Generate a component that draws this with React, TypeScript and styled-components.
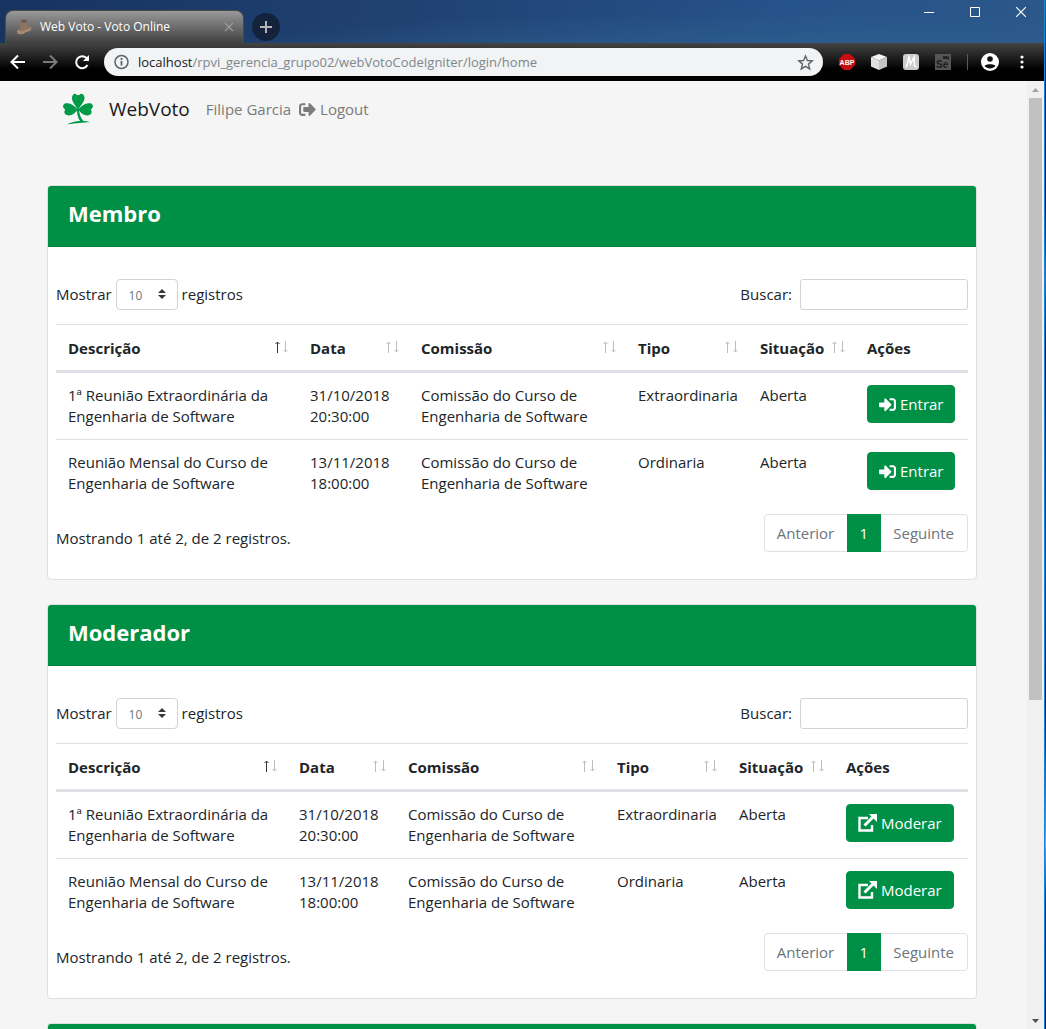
import React from 'react';
import styled, { createGlobalStyle } from 'styled-components';
import { FaSignInAlt, FaSignOutAlt } from 'react-icons/fa';

const GREEN = '#009045';
const INK = '#212529';
const LINE = '#dee2e6';
const FONT = '"Open Sans", "Noto Sans", sans-serif';

const GlobalStyle = createGlobalStyle`
  *, *::before, *::after { box-sizing: border-box; }
  body { margin: 0; font-family: ${FONT}; font-size: 15px; line-height: 21px; color: ${INK}; }
  button, input, select { font-family: inherit; }
`;

/* ---------- Browser window ---------- */

const Desktop = styled.div`
  height: 100vh;
  padding-right: 1px;
  overflow: hidden;
  background: linear-gradient(180deg, #2c5c8e 0%, #16263c 8%, #0d1a2c 20%, #3f6f9e 27%, #10151d 34%, #27476b 55%, #0d1726 68%, #7f9db8 82%, #16304f 88%, #0a0f18 100%);
`;

const Window = styled.div`
  height: 100%;
  display: flex;
  flex-direction: column;
  border-right: 1px solid #1883d7;
`;

const TabStrip = styled.div`
  flex: none;
  height: 43px;
  display: flex;
  align-items: flex-end;
  padding-left: 5px;
  background: radial-gradient(ellipse at 75% 160%, #30618e 0%, rgba(48, 97, 142, 0) 60%), linear-gradient(100deg, #17335f 0%, #204273 40%, #26528a 75%, #2b5789 100%);
`;

const Tab = styled.div`
  width: 239px;
  height: 33px;
  display: flex;
  align-items: center;
  gap: 8px;
  padding: 0 8px 0 10px;
  border: 1px solid #4a4a4a;
  border-bottom: 0;
  border-radius: 8px 8px 0 0;
  background: linear-gradient(#999, #404040);
  color: #fff;
  font-size: 12px;
  line-height: 16px;
`;

const TabTitle = styled.span`
  flex: 1;
  white-space: nowrap;
`;

const BareButton = styled.button`
  display: flex;
  align-items: center;
  justify-content: center;
  padding: 0;
  border: 0;
  background: none;
  color: inherit;
`;

const NewTab = styled(BareButton)`
  width: 28px;
  height: 28px;
  margin: 0 0 2px 8px;
  border-radius: 50%;
  background: #13233b;
  color: #b4b4b4;
`;

const WindowButtons = styled.div`
  display: flex;
  align-self: flex-start;
  margin-left: auto;
  color: #fff;
`;

const WindowButton = styled(BareButton)`
  width: 46px;
  height: 24px;
`;

const Toolbar = styled.div`
  flex: none;
  height: 38px;
  display: flex;
  align-items: center;
  padding: 0 10px 0 6px;
  background: linear-gradient(#444 0%, #000 70%);
  color: #fff;
`;

const ToolButton = styled(BareButton)<{ $dim?: boolean }>`
  flex: none;
  width: 24px;
  height: 24px;
  margin-right: 8px;
  color: ${(p) => (p.$dim ? '#7b7b7b' : '#fff')};
`;

const AddressBar = styled.div`
  flex: 1;
  height: 28px;
  display: flex;
  align-items: center;
  gap: 8px;
  margin: 0 12px 0 2px;
  padding: 0 9px;
  border-radius: 14px;
  background: #f1f3f4;
  color: #5f6368;
`;

const Url = styled.span`
  flex: 1;
  font-size: 13px;
  line-height: 18px;
  white-space: nowrap;
  color: #80868b;
  b { font-weight: 400; color: #202124; }
`;

const Extensions = styled.div`
  display: flex;
  align-items: center;
  gap: 8px;
`;

const Extension = styled(BareButton)`
  width: 24px;
  height: 24px;
`;

const Divider = styled.span`
  width: 1px;
  height: 16px;
  margin: 0 2px 0 4px;
  background: #5a5a5a;
`;

/* ---------- Page ---------- */

const Viewport = styled.div`
  flex: 1;
  min-height: 0;
  display: flex;
  background: #f5f5f5;
`;

const Page = styled.div`
  flex: 1;
  min-width: 0;
  overflow: hidden;
  padding: 0 50px 0 47px;
`;

const Scrollbar = styled.div`
  flex: none;
  width: 17px;
  display: grid;
  grid-template-rows: 17px 602px 1fr 17px;
  justify-items: center;
  align-items: center;
  background: #f0f0f0;
`;

const Thumb = styled.div`
  width: 13px;
  height: 100%;
  background: #c1c1c1;
`;

const Navbar = styled.nav`
  height: 104px;
  display: flex;
  align-items: flex-start;
  padding: 12px 15px;
`;

const NavItems = styled.div`
  display: flex;
  align-items: center;
  height: 32px;
`;

const Brand = styled.a`
  display: flex;
  align-items: center;
  gap: 15px;
  margin-right: 16px;
  color: #17191c;
  font-size: 19px;
  line-height: 30px;
  text-decoration: none;
`;

const NavLink = styled.a`
  display: flex;
  align-items: center;
  gap: 4px;
  margin-right: 8px;
  color: #7b7b7b;
  font-size: 15px;
  text-decoration: none;
  white-space: nowrap;
`;

const Card = styled.section`
  margin-bottom: 24px;
  border: 1px solid #dfdfdf;
  border-radius: 4px;
  background: #fff;
`;

const CardHeader = styled.header`
  min-height: 61px;
  padding: 13px 20px 18px;
  border-bottom: 1px solid #007e3d;
  border-radius: 3px 3px 0 0;
  background: ${GREEN};
`;

const CardTitle = styled.h3`
  margin: 0;
  color: #fff;
  font-size: 22px;
  font-weight: 700;
  line-height: 29px;
`;

const CardBody = styled.div`
  padding: 32px 8px 27px;
`;

const Controls = styled.div`
  display: flex;
  justify-content: space-between;
  align-items: center;
  margin-bottom: 14px;
`;

const ControlLabel = styled.label<{ $gap: number }>`
  display: flex;
  align-items: center;
  gap: ${(p) => p.$gap}px;
`;

const SelectWrap = styled.span`
  position: relative;
  display: flex;
  svg { position: absolute; right: 12px; top: 10px; pointer-events: none; }
`;

const LengthSelect = styled.select`
  appearance: none;
  width: 62px;
  height: 31px;
  padding: 2px 24px 0 12px;
  border: 1px solid #ced4da;
  border-radius: 4px;
  background: #fff;
  color: #6c757d;
  font-size: 12px;
`;

const SearchInput = styled.input`
  width: 168px;
  height: 31px;
  padding: 4px 8px;
  border: 1px solid #ced4da;
  border-radius: 3px;
  background: #fff;
  color: #495057;
  font-size: 14px;
`;

const Table = styled.table`
  width: 100%;
  table-layout: fixed;
  border-collapse: separate;
  border-spacing: 0;
`;

const Th = styled.th`
  padding: 13px 9px 11px 12px;
  border-top: 1px solid ${LINE};
  border-bottom: 3px solid ${LINE};
  font-weight: 700;
  text-align: left;
`;

const HeadCell = styled.div`
  display: flex;
  justify-content: space-between;
  svg { flex: none; margin-top: 3px; }
`;

const Td = styled.td`
  height: 66px;
  padding: 12px;
  vertical-align: top;
  tr + tr > & { border-top: 1px solid ${LINE}; height: 67px; }
`;

const ActionButton = styled.button`
  display: inline-flex;
  align-items: center;
  gap: 4px;
  height: 38px;
  padding: 0 11px;
  border: 1px solid ${GREEN};
  border-radius: 4px;
  background: ${GREEN};
  color: #fff;
  font-size: 15px;
  white-space: nowrap;
`;

const Footer = styled.div`
  display: flex;
  justify-content: space-between;
  align-items: flex-start;
  margin-top: 8px;
`;

const Info = styled.div`
  padding-top: 14px;
`;

const Pagination = styled.div`
  display: flex;
  border: 1px solid ${LINE};
  border-radius: 4px;
`;

const PageButton = styled.button<{ $active?: boolean }>`
  height: 36px;
  padding: 0 13px 0 12px;
  border: 0;
  background: none;
  color: #6c757d;
  font-size: 15px;
  ${(p) => p.$active && `
    height: 38px;
    width: 34px;
    margin: -1px 0;
    background: ${GREEN};
    color: #fff;
  `}
`;

/* ---------- Icons ---------- */

const Boot = () => (
  <svg width="16" height="16" viewBox="0 0 16 16">
    <path d="M5 1q3-1 6 0l0 4q1 2 4 3 1 2 0 3-3 2-5 2-3 3-7 2-3-1-2-4l3-2z" fill="#8b7463" />
    <path d="M1 11q4 2 8 0l6-2v2q-3 2-5 2-3 3-7 2-2-1-2-4z" fill="#a58b72" />
    <path d="M5 1q3-1 6 0v2q-3 1-6 0z" fill="#6d5a4e" />
  </svg>
);

const Clover = () => (
  <svg width="32" height="32" viewBox="0 0 32 32" fill="#009a49">
    <path d="M16 17C13.500 12.500 10 9 10 5c0-3.500 2.800-5.300 4.500-3.300.8.6 2.200.6 3 0C19.200-.3 22.500 1.500 22.500 5c0 4-4 7.500-6.500 12z" />
    <path d="M16 16.500c-3 4-7 7-11.300 5.600-2.300-.6-3-3-1.900-4.500.5-.7.200-1.500-.7-2.100C.2 14 1 11 3.700 10.300 8.500 9.300 12.500 13 16 16.500z" />
    <path d="M16 16.500c3 4 7 7 11.300 5.600 2.300-.6 3-3 1.900-4.500-.5-.7-.2-1.500.7-2.100 1.900-1.500 1.100-4.500-1.600-5.200-4.800-1-8.800 2.700-12.300 6.200z" />
    <path d="M15 15.500h2c0 5 1.500 9.500 4.500 12.500 2.300 0 4.500.4 6.500 1.200-6.500.2-13 1-23 2 4-1.800 8.500-2.900 13-3.100-2.400-3.500-3.200-7.600-3-12.600z" />
  </svg>
);

const SortArrows = ({ active }: { active?: boolean }) => (
  <svg width="15" height="12" viewBox="0 0 15 12" fill="none" strokeWidth="1">
    <path d="M3.500 12V1M1.500 3 3.500 1 5.500 3" stroke={active ? '#33373b' : '#bcbdbf'} />
    <path d="M11.500 0v11M9.500 9l2 2 2-2" stroke="#bcbdbf" />
  </svg>
);

const External = () => (
  <svg width="19" height="18" viewBox="0 0 19 18" fill="none" stroke="#fff">
    <path d="M10 4H1.500v12.500H14V11" strokeWidth="2.400" />
    <path d="M6.500 11.500 15 3" strokeWidth="3" />
    <path d="M11 0h8v8z" fill="#fff" stroke="none" />
  </svg>
);

const SelectArrows = () => (
  <svg width="8" height="10" viewBox="0 0 8 10" fill="#343a40">
    <path d="M4 0 8 4H0zM4 10 0 6h8z" />
  </svg>
);

/* ---------- Content ---------- */

type Panel = { title: string; action: string; icon: React.ReactNode; widths: number[] };

const panels: Panel[] = [
  { title: 'Membro', action: 'Entrar', icon: <FaSignInAlt size={17} />, widths: [242, 111, 217, 122, 107, 113] },
  { title: 'Moderador', action: 'Moderar', icon: <External />, widths: [231, 109, 209, 122, 107, 134] },
];

const columns = ['Descrição', 'Data', 'Comissão', 'Tipo', 'Situação', 'Ações'];

const meetings = [
  ['1ª Reunião Extraordinária da Engenharia de Software', '31/10/2018 20:30:00', 'Comissão do Curso de Engenharia de Software', 'Extraordinaria', 'Aberta'],
  ['Reunião Mensal do Curso de Engenharia de Software', '13/11/2018 18:00:00', 'Comissão do Curso de Engenharia de Software', 'Ordinaria', 'Aberta'],
];

const MeetingPanel = ({ title, action, icon, widths }: Panel) => (
  <Card>
    <CardHeader><CardTitle>{title}</CardTitle></CardHeader>
    <CardBody>
      <Controls>
        <ControlLabel $gap={4}>
          Mostrar
          <SelectWrap>
            <LengthSelect defaultValue="10"><option>10</option></LengthSelect>
            <SelectArrows />
          </SelectWrap>
          registros
        </ControlLabel>
        <ControlLabel $gap={8}>Buscar:<SearchInput type="search" /></ControlLabel>
      </Controls>
      <Table>
        <colgroup>{widths.map((w, i) => <col key={i} style={{ width: w }} />)}</colgroup>
        <thead>
          <tr>
            {columns.map((name, i) => (
              <Th key={name}>
                <HeadCell>{name}{i < 5 && <SortArrows active={i === 0} />}</HeadCell>
              </Th>
            ))}
          </tr>
        </thead>
        <tbody>
          {meetings.map((row) => (
            <tr key={row[0]}>
              {row.map((text, c) => <Td key={c}>{text}</Td>)}
              <Td><ActionButton>{icon}{action}</ActionButton></Td>
            </tr>
          ))}
        </tbody>
      </Table>
      <Footer>
        <Info>Mostrando 1 até 2, de 2 registros.</Info>
        <Pagination>
          <PageButton>Anterior</PageButton>
          <PageButton $active>1</PageButton>
          <PageButton>Seguinte</PageButton>
        </Pagination>
      </Footer>
    </CardBody>
  </Card>
);

export default function App() {
  return (
    <Desktop>
      <GlobalStyle />
      <Window>
        <TabStrip>
          <Tab>
            <Boot />
            <TabTitle>Web Voto - Voto Online</TabTitle>
            <BareButton aria-label="Fechar guia">
              <svg width="12" height="12" viewBox="0 0 12 12" stroke="#9a9a9a" strokeWidth="1.300"><path d="M2 2l8 8M10 2l-8 8" /></svg>
            </BareButton>
          </Tab>
          <NewTab aria-label="Nova guia">
            <svg width="14" height="14" viewBox="0 0 14 14" stroke="currentColor" strokeWidth="2"><path d="M7 1v12M1 7h12" /></svg>
          </NewTab>
          <WindowButtons>
            <WindowButton aria-label="Minimizar">
              <svg width="10" height="10" viewBox="0 0 10 10" stroke="currentColor"><path d="M0 5.500h10" /></svg>
            </WindowButton>
            <WindowButton aria-label="Maximizar">
              <svg width="10" height="10" viewBox="0 0 10 10" stroke="currentColor" fill="none"><path d="M.5.5h9v9h-9z" /></svg>
            </WindowButton>
            <WindowButton aria-label="Fechar">
              <svg width="10" height="10" viewBox="0 0 10 10" stroke="currentColor" strokeWidth="1.200"><path d="M0 0l10 10M10 0L0 10" /></svg>
            </WindowButton>
          </WindowButtons>
        </TabStrip>
        <Toolbar>
          <ToolButton aria-label="Voltar">
            <svg width="16" height="16" viewBox="0 0 16 16" fill="none" stroke="currentColor" strokeWidth="2"><path d="M15 8H2M8 1.500 1.500 8 8 14.500" /></svg>
          </ToolButton>
          <ToolButton $dim aria-label="Avançar">
            <svg width="16" height="16" viewBox="0 0 16 16" fill="none" stroke="currentColor" strokeWidth="2"><path d="M1 8h13M8 1.500 14.500 8 8 14.500" /></svg>
          </ToolButton>
          <ToolButton aria-label="Recarregar">
            <svg width="16" height="16" viewBox="0 0 16 16" fill="none" stroke="currentColor" strokeWidth="2"><path d="M13.500 11A6 6 0 1 1 12.500 4L14 5.500" /><path d="M15 1v6H9z" fill="currentColor" stroke="none" /></svg>
          </ToolButton>
          <AddressBar>
            <svg width="17" height="16" viewBox="0 0 17 16" fill="none" stroke="currentColor"><circle cx="8.500" cy="8" r="6.500" strokeWidth="1.500" /><path d="M8.500 7v4.500M8.500 4v2" strokeWidth="1.800" /></svg>
            <Url><b>localhost</b>/rpvi_gerencia_grupo02/webVotoCodeIgniter/login/home</Url>
            <svg width="17" height="17" viewBox="0 0 17 17" fill="none" stroke="currentColor" strokeWidth="1.400"><path d="M8.500 2l1.900 4.500 4.800.4-3.700 3.200 1.200 4.800-4.200-2.600-4.200 2.600 1.200-4.800L1.800 6.900l4.800-.4z" /></svg>
          </AddressBar>
          <Extensions>
            <Extension aria-label="Adblock Plus">
              <svg width="16" height="16" viewBox="0 0 16 16"><path d="M5 0h6l5 5v6l-5 5H5l-5-5V5z" fill="#c70d0f" /><text x="8" y="10.500" fontSize="7" fontWeight="700" fill="#fff" textAnchor="middle" fontFamily="Liberation Sans, sans-serif">ABP</text></svg>
            </Extension>
            <Extension aria-label="Cubo">
              <svg width="16" height="16" viewBox="0 0 16 16"><path d="M8 0l8 3-8 3.500L0 3z" fill="#f4f4f4" /><path d="M0 3l8 3.500V16l-8-3.500z" fill="#e2e2e2" /><path d="M16 3L8 6.500V16l8-3.500z" fill="#c4c4c4" /></svg>
            </Extension>
            <Extension aria-label="M">
              <svg width="16" height="16" viewBox="0 0 16 16"><rect width="16" height="16" rx="3" fill="#cbcbcb" /><path d="M3 13C5 10 5 6 6 3l1.500 7L11 3l.5 9 2 1" fill="none" stroke="#fff" strokeWidth="1.500" /></svg>
            </Extension>
            <Extension aria-label="Selenium">
              <svg width="16" height="16" viewBox="0 0 16 16"><rect width="16" height="16" fill="#555" /><path d="M8 2h4v1l2-1v4l-2-1H8z" fill="#262626" /><text x="1" y="14" fontSize="10" fontWeight="700" fill="#1c1c1c" fontFamily="Liberation Sans, sans-serif">Se</text></svg>
            </Extension>
            <Divider />
            <Extension aria-label="Perfil">
              <svg width="18" height="18" viewBox="0 0 18 18"><circle cx="9" cy="9" r="9" fill="#fff" /><circle cx="9" cy="6" r="2.800" fill="#111" /><path d="M3.500 13c1-2.500 10-2.500 11 0-2.500 3.300-8.500 3.300-11 0z" fill="#111" /></svg>
            </Extension>
            <Extension aria-label="Menu">
              <svg width="4" height="14" viewBox="0 0 4 14" fill="#fff"><circle cx="2" cy="2" r="1.600" /><circle cx="2" cy="7" r="1.600" /><circle cx="2" cy="12" r="1.600" /></svg>
            </Extension>
          </Extensions>
        </Toolbar>
        <Viewport>
          <Page>
            <Navbar>
              <NavItems>
                <Brand href="#"><Clover />WebVoto</Brand>
                <NavLink href="#">Filipe Garcia</NavLink>
                <NavLink href="#"><FaSignOutAlt size={17} />Logout</NavLink>
              </NavItems>
            </Navbar>
            {panels.map((panel) => <MeetingPanel key={panel.title} {...panel} />)}
            <Card><CardHeader /></Card>
          </Page>
          <Scrollbar>
            <svg width="7" height="4" viewBox="0 0 7 4" fill="#a3a3a3"><path d="M0 4l3.500-4L7 4z" /></svg>
            <Thumb />
            <span />
            <svg width="7" height="4" viewBox="0 0 7 4" fill="#505050"><path d="M0 0l3.500 4L7 0z" /></svg>
          </Scrollbar>
        </Viewport>
      </Window>
    </Desktop>
  );
}
